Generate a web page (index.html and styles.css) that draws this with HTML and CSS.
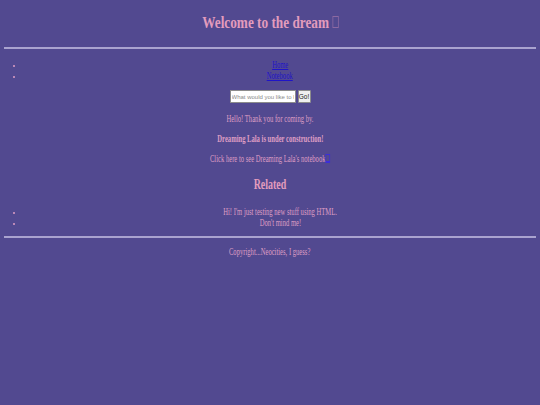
FILE: index.html
```html
<!DOCTYPE html>
<html lang="en">
<head>
<meta charset="utf-8">
<title>Dreaming Lala</title>
<link rel="stylesheet" href="styles.css">
</head>
<body>
  <h1 class="title"><span class="sq sq-title">Welcome to the dream <span class="tofu tofu-title"></span></span></h1>
  <hr class="rule rule-top">
  <ul class="list nav">
    <li><span class="sq"><a href="#">Home</a></span></li>
    <li><span class="sq"><a href="#">Notebook</a></span></li>
  </ul>
  <form class="search">
    <input class="search-input" type="text" placeholder="What would you like to know?">
    <button class="search-btn" type="button">Go!</button>
  </form>
  <p class="line line-first"><span class="sq">Hello! Thank you for coming by.</span></p>
  <p class="line"><strong class="sq">Dreaming Lala is under construction!</strong></p>
  <p class="line"><span class="sq">Click here to see Dreaming Lala's notebook<a href="#" class="tofu-link"><span class="tofu tofu-blue"></span></a></span></p>
  <h2 class="subtitle"><span class="sq sq-sub">Related</span></h2>
  <ul class="list related">
    <li><span class="sq">Hi! I'm just testing new stuff using HTML.</span></li>
    <li><span class="sq">Don't mind me!</span></li>
  </ul>
  <hr class="rule rule-bottom">
  <p class="line footer"><span class="sq">Copyright...Neocities, I guess?</span></p>
</body>
</html>
```

FILE: styles.css
```css
html {
  background: #524990;
}
body {
  margin: 0 4px;
  padding: 0;
  background: #524990;
  color: #df9ec4;
  font-family: "Liberation Serif", "Times New Roman", serif;
  font-size: 10px;
  line-height: 11px;
  text-align: center;
}
.sq {
  display: inline-block;
  transform: scaleX(0.66);
  transform-origin: center;
  white-space: nowrap;
}
.sq-title {
  transform: scaleX(0.78);
}
.sq-sub {
  transform: scaleX(0.71);
}
.title {
  margin: 13px 0 0;
  font-size: 17px;
  line-height: 20px;
  font-weight: bold;
  color: #e39cbd;
}
.tofu {
  display: inline-block;
  box-sizing: border-box;
  vertical-align: baseline;
}
.tofu-title {
  width: 8px;
  height: 12px;
  border: 1px solid rgba(227, 156, 189, 0.4);
}
.tofu-blue {
  width: 7px;
  height: 9px;
  border: 1px solid #3b2fd8;
  border-bottom-width: 2px;
  margin-bottom: -1px;
}
.rule {
  border: 0;
  height: 2px;
  background: #aaa3cf;
  margin: 0;
}
.rule-top {
  margin-top: 14px;
}
.list {
  margin: 0;
  padding: 0 0 0 20px;
  list-style: disc outside;
}
.list li::marker {
  color: #df9ec4;
  font-size: 7px;
}
.nav {
  margin-top: 10px;
}
.nav a,
.tofu-link {
  color: #1f14c8;
  text-decoration: underline;
}
.search {
  margin: 9px 0 0;
  display: flex;
  justify-content: center;
  align-items: center;
  gap: 2px;
}
.search-input {
  box-sizing: border-box;
  width: 66px;
  height: 13px;
  margin: 0;
  padding: 0 1px;
  border: 1px solid #8c8c8c;
  background: #ffffff;
  font-family: "Liberation Sans", Arial, sans-serif;
  font-size: 6px;
}
.search-input::placeholder {
  color: #8a8a8a;
}
.search-btn {
  box-sizing: border-box;
  width: 13px;
  height: 13px;
  margin: 0;
  padding: 0;
  border: 1px solid #8c8c8c;
  border-radius: 1px;
  background: #efefef;
  color: #222;
  font-family: "Liberation Sans", Arial, sans-serif;
  font-size: 6.5px;
}
.line {
  margin: 9px 0 0;
}
.line-first {
  margin-top: 10px;
}
.subtitle {
  margin: 13px 0 0;
  font-size: 14px;
  line-height: 16px;
  font-weight: bold;
  color: #e39cbd;
}
.related {
  margin-top: 13px;
}
.rule-bottom {
  margin-top: 8px;
}
.footer {
  margin-top: 8px;
}
```
